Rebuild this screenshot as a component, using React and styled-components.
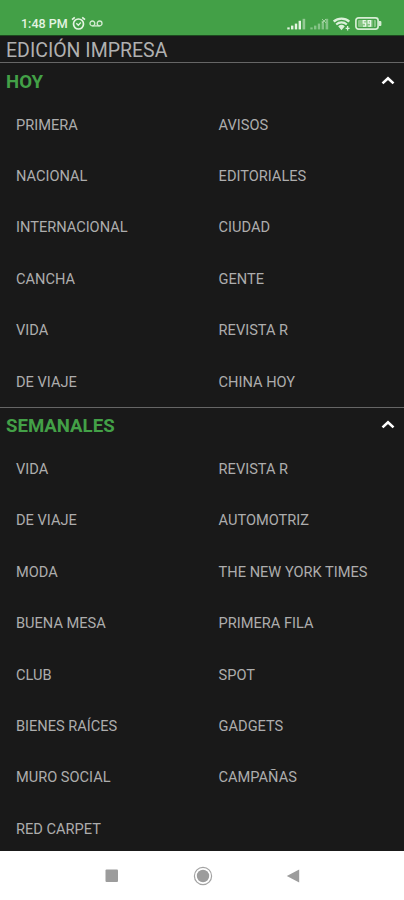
import React, { useState } from "react";
import styled, { createGlobalStyle } from "styled-components";

const sections = [
  {
    title: "HOY",
    items: [
      "PRIMERA",
      "AVISOS",
      "NACIONAL",
      "EDITORIALES",
      "INTERNACIONAL",
      "CIUDAD",
      "CANCHA",
      "GENTE",
      "VIDA",
      "REVISTA R",
      "DE VIAJE",
      "CHINA HOY",
    ],
  },
  {
    title: "SEMANALES",
    items: [
      "VIDA",
      "REVISTA R",
      "DE VIAJE",
      "AUTOMOTRIZ",
      "MODA",
      "THE NEW YORK TIMES",
      "BUENA MESA",
      "PRIMERA FILA",
      "CLUB",
      "SPOT",
      "BIENES RAÍCES",
      "GADGETS",
      "MURO SOCIAL",
      "CAMPAÑAS",
      "RED CARPET",
    ],
  },
];

const AlarmIcon = () => (
  <svg width="15" height="15" viewBox="0 0 15 15" fill="none" stroke="#e4f4e2">
    <circle cx="7.5" cy="8" r="5" strokeWidth="1.7" />
    <path d="M1 3.6 3.8 1.3M14 3.6 11.2 1.3" strokeWidth="1.7" />
    <path d="m5.3 7.2 2 2 2.6-2.7" strokeWidth="1.3" />
  </svg>
);

const VoicemailIcon = () => (
  <svg width="14" height="7" viewBox="0 0 14 7" fill="none" stroke="#d3ebd1">
    <circle cx="3.4" cy="3.4" r="2.4" strokeWidth="1.3" />
    <circle cx="10.6" cy="3.4" r="2.4" strokeWidth="1.3" />
    <path d="M3.4 5.9h7.2" strokeWidth="1.3" />
  </svg>
);

const SignalIcon = ({ empty }) => (
  <svg width="19" height="12" viewBox="0 0 19 12" fill="#e4f4e2">
    <g opacity={empty ? 0.42 : 1}>
      <rect x="0.3" y="9.4" width="2.4" height="2" />
      <rect x="4" y="7.6" width="2.4" height="3.8" />
      <rect x="7.8" y="5.6" width="2.4" height="5.8" />
      <rect x="11.6" y="2.8" width="2.4" height="8.6" />
      <rect x="15.6" y="0.8" width="2.6" height="10.6" opacity={empty ? 1 : 0.5} />
    </g>
    {empty && (
      <path d="m12 1 4 4m0-4-4 4" stroke="#a9d7a6" strokeWidth="0.9" />
    )}
  </svg>
);

const WifiIcon = () => (
  <svg width="18" height="14" viewBox="0 0 18 14" fill="none" stroke="#dcf0da">
    <path d="M.7 4.6a11.6 11.6 0 0 1 15.6 0" strokeWidth="2.4" />
    <path d="M3.2 7.5a7.8 7.8 0 0 1 10.6 0" strokeWidth="2.1" />
    <path d="M5.2 9.3a5 5 0 0 1 6.6 0L8.5 13.2z" fill="#dcf0da" stroke="none" />
    <path d="M14.6 9v4.6M12.6 11.4h4" strokeWidth="1.3" />
  </svg>
);

const BatteryIcon = () => (
  <svg width="27" height="13" viewBox="0 0 27 13">
    <rect
      x="0.9"
      y="0.9"
      width="22.2"
      height="11.2"
      rx="2.6"
      fill="none"
      stroke="#d6edd4"
      strokeWidth="1.7"
    />
    <rect x="3" y="3" width="18" height="7" rx="1" fill="#86c584" />
    <path d="M24 4h1.4q1 0 1 1v3q0 1-1 1H24z" fill="#d6edd4" />
    <path
      d="M10.8 3.6H8.2v2.6h2.4v3H8M15.6 6.2h-2.4V3.6h2.4v5.6h-2.4"
      fill="none"
      stroke="#e9f7e8"
      strokeWidth="1.2"
    />
    <path d="M18.3 3v7" stroke="#4fa74f" strokeWidth="1.4" />
  </svg>
);

const ChevronIcon = () => (
  <svg width="14" height="9" viewBox="0 0 14 9" fill="none">
    <path d="m1.5 7.4 5.5-5.2 5.5 5.2" stroke="#fff" strokeWidth="2.6" />
  </svg>
);

const App = () => {
  const [closed, setClosed] = useState({});

  const toggle = (title) =>
    setClosed((current) => ({ ...current, [title]: !current[title] }));

  return (
    <Screen>
      <GlobalStyle />
      <StatusBar>
        <StatusGroup $gap="3px">
          <Clock>1:48 PM</Clock>
          <AlarmIcon />
          <VoicemailIcon />
        </StatusGroup>
        <StatusGroup $gap="4px">
          <SignalIcon />
          <SignalIcon empty />
          <WifiIcon />
          <BatteryIcon />
        </StatusGroup>
      </StatusBar>

      <Content>
        <PageTitle>EDICIÓN IMPRESA</PageTitle>
        {sections.map((section) => (
          <Section key={section.title}>
            <SectionHeader onClick={() => toggle(section.title)}>
              <SectionTitle>{section.title}</SectionTitle>
              <Chevron $closed={closed[section.title]}>
                <ChevronIcon />
              </Chevron>
            </SectionHeader>
            {!closed[section.title] && (
              <ItemGrid>
                {section.items.map((item) => (
                  <Item key={item}>{item}</Item>
                ))}
              </ItemGrid>
            )}
          </Section>
        ))}
      </Content>

      <NavBar>
        <svg width="14" height="14" viewBox="0 0 14 14">
          <rect x="0.5" y="0.5" width="12.5" height="12.5" rx="1" fill="#9c9c9c" />
        </svg>
        <svg width="20" height="20" viewBox="0 0 20 20">
          <circle cx="10" cy="10" r="8.6" fill="none" stroke="#a3a3a3" strokeWidth="1.2" />
          <circle cx="10" cy="10" r="6.2" fill="#9c9c9c" />
        </svg>
        <svg width="14" height="14" viewBox="0 0 14 14">
          <path d="M.8 7 13.2.4v13.2z" fill="#9c9c9c" />
        </svg>
      </NavBar>
    </Screen>
  );
};

const GlobalStyle = createGlobalStyle`
  body {
    margin: 0;
    background: #191919;
    font-family: Roboto, "Liberation Sans", sans-serif;
  }

  svg {
    display: block;
    flex-shrink: 0;
  }
`;

const Screen = styled.div`
  display: flex;
  flex-direction: column;
  height: 100vh;
  overflow: hidden;
`;

const StatusBar = styled.header`
  display: flex;
  align-items: center;
  justify-content: space-between;
  flex-shrink: 0;
  box-sizing: border-box;
  height: 36px;
  padding: 12px 22px 0 21px;
  background: #43a047;
  border-bottom: 1px solid #1d4a1f;
`;

const StatusGroup = styled.div`
  display: flex;
  align-items: center;
  gap: ${(props) => props.$gap};
`;

const Clock = styled.span`
  font-size: 12.5px;
  font-weight: 500;
  line-height: 16px;
  color: #e4f4e2;
`;

const Content = styled.main`
  flex: 1;
  min-height: 0;
  overflow: hidden;
  background: #191919;
`;

const PageTitle = styled.h1`
  margin: 0;
  padding-left: 6px;
  height: 26px;
  font-size: 19.5px;
  font-weight: 400;
  line-height: 30px;
  color: #b0b0b0;
`;

const Section = styled.section`
  border-top: 1px solid #666;

  &:first-of-type {
    padding-top: 1px;
  }
`;

const SectionHeader = styled.div`
  display: flex;
  align-items: center;
  justify-content: space-between;
  height: 35px;
  padding: 0 9px 0 6px;
  cursor: pointer;
`;

const SectionTitle = styled.h2`
  margin: 0;
  font-size: 18.6px;
  font-weight: 700;
  line-height: 24px;
  color: #43a047;
`;

const Chevron = styled.span`
  margin-bottom: 2px;
  transform: ${(props) => (props.$closed ? "rotate(180deg)" : "none")};
`;

const ItemGrid = styled.div`
  display: grid;
  grid-template-columns: 202.6px 1fr;
  grid-auto-rows: 51.4px;
`;

const Item = styled.div`
  display: flex;
  align-items: center;
  padding-left: 16px;
  font-size: 14.6px;
  color: #adadad;
  white-space: nowrap;
`;

const NavBar = styled.nav`
  display: flex;
  align-items: center;
  justify-content: space-between;
  flex-shrink: 0;
  box-sizing: border-box;
  height: 49px;
  padding: 1px 104px 0 105px;
  background: #fff;
`;

export default App;
